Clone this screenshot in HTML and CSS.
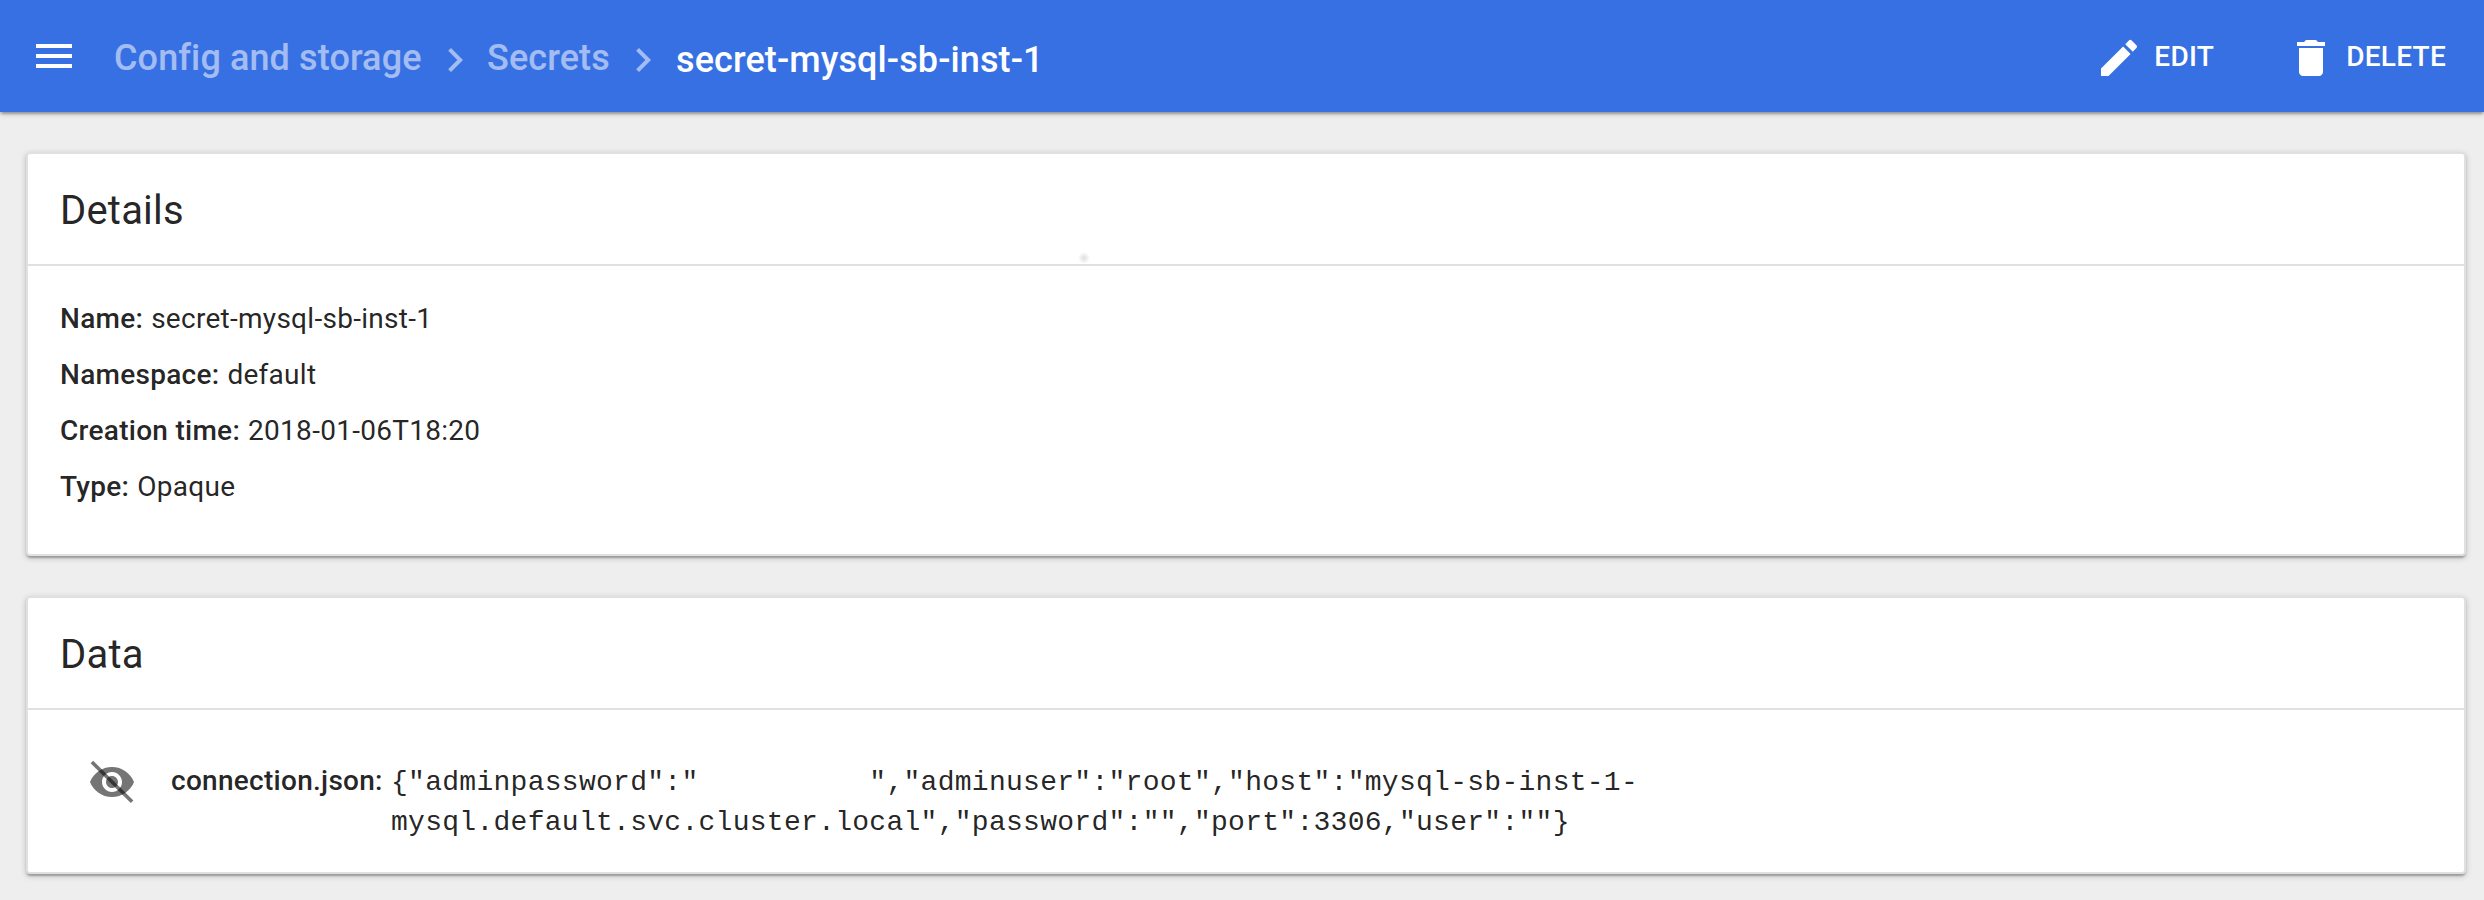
FILE: index.html
```html
<!DOCTYPE html>
<html lang="en">
<head>
<meta charset="utf-8">
<title>secret-mysql-sb-inst-1</title>
<link rel="stylesheet" href="styles.css">
</head>
<body>
<header class="toolbar">
  <svg class="icon menu" viewBox="0 0 24 24"><path d="M3 18h18v-2H3v2zm0-5h18v-2H3v2zm0-7v2h18V6H3z"/></svg>
  <nav class="crumbs">
    <a class="crumb first">Config and storage</a>
    <svg class="icon chevron" viewBox="0 0 24 24"><path d="M10 6L8.59 7.41 13.17 12l-4.58 4.59L10 18l6-6z"/></svg>
    <a class="crumb second">Secrets</a>
    <svg class="icon chevron" viewBox="0 0 24 24"><path d="M10 6L8.59 7.41 13.17 12l-4.58 4.59L10 18l6-6z"/></svg>
    <span class="crumb current">secret-mysql-sb-inst-1</span>
  </nav>
  <div class="actions">
    <button class="action edit"><svg class="icon" viewBox="0 0 24 24"><path d="M3 17.25V21h3.75L17.81 9.94l-3.75-3.75L3 17.25zM20.71 7.04a.996.996 0 0 0 0-1.41l-2.34-2.34a.996.996 0 0 0-1.41 0l-1.83 1.83 3.75 3.75 1.83-1.83z"/></svg><span>EDIT</span></button>
    <button class="action delete"><svg class="icon" viewBox="0 0 24 24"><path d="M6 19c0 1.1.9 2 2 2h8c1.1 0 2-.9 2-2V7H6v12zM19 4h-3.5l-1-1h-5l-1 1H5v2h14V4z"/></svg><span>DELETE</span></button>
  </div>
</header>
<main class="content">
  <section class="card details">
    <h2 class="card-title">Details<i class="spot"></i></h2>
    <div class="rows">
      <div class="row"><b>Name:</b><span>secret-mysql-sb-inst-1</span></div>
      <div class="row"><b>Namespace:</b><span>default</span></div>
      <div class="row"><b>Creation time:</b><span>2018-01-06T18:20</span></div>
      <div class="row"><b>Type:</b><span>Opaque</span></div>
    </div>
  </section>
  <section class="card data">
    <h2 class="card-title">Data</h2>
    <div class="entry">
      <svg class="icon eye" viewBox="0 0 24 24"><path d="M12 4.5C7 4.5 2.73 7.61 1 12c1.73 4.39 6 7.5 11 7.5s9.27-3.11 11-7.5c-1.73-4.39-6-7.5-11-7.5zM12 17c-2.76 0-5-2.24-5-5s2.24-5 5-5 5 2.24 5 5-2.24 5-5 5zm0-8c-1.66 0-3 1.34-3 3s1.34 3 3 3 3-1.34 3-3-1.34-3-3-3z"/><path d="M2.6 1.4L22.7 21.2l-1.3 1.3L1.3 2.6z"/></svg>
      <b class="key">connection.json:</b>
      <pre class="value">{"adminpassword":"          ","adminuser":"root","host":"mysql-sb-inst-1-
mysql.default.svc.cluster.local","password":"","port":3306,"user":""}</pre>
    </div>
  </section>
</main>
</body>
</html>
```
FILE: styles.css
```css
* { box-sizing: border-box; }
body {
  margin: 0;
  height: 900px;
  overflow: hidden;
  background: #eee;
  color: rgba(0, 0, 0, .87);
  font: 400 28px/40px Roboto, sans-serif;
  letter-spacing: .01em;
}
.icon { width: 48px; height: 48px; flex: none; fill: currentColor; display: block; }
.toolbar {
  position: relative;
  height: 112px;
  display: flex;
  padding: 32px 38px 0 30px;
  background: #3770e3;
  color: #fff;
  box-shadow: 0 2px 6px rgba(0, 0, 0, .2), 0 2px 2px rgba(0, 0, 0, .14), 0 4px 2px -2px rgba(0, 0, 0, .12);
}
.crumbs { display: flex; margin-left: 36px; font-size: 36px; font-weight: 500; line-height: 48px; letter-spacing: .003em; white-space: nowrap; }
.crumb { opacity: .54; margin-top: 2px; }
.crumb.first { width: 317px; }
.crumb.second { width: 132px; margin-left: 8px; }
.crumb.current { opacity: 1; margin: 4px 0 0 9px; }
.chevron { margin-top: 4px; opacity: .54; }
.actions { display: flex; margin-left: auto; }
.action { display: flex; align-items: flex-start; gap: 11px; padding: 2px 0 0; border: 0; background: none; color: #fff; font: 500 28px/46px Roboto, sans-serif; letter-spacing: .01em; }
.delete { margin-left: 73px; }
.content { display: flex; flex-direction: column; gap: 40px; padding: 40px 18px 0 26px; }
.card {
  background: #fff;
  border: 2px solid #e0e0e0;
  border-radius: 4px;
  box-shadow: 0 2px 6px rgba(0, 0, 0, .2), 0 2px 2px rgba(0, 0, 0, .14), 0 4px 2px -2px rgba(0, 0, 0, .12);
}
.details { height: 404px; }
.data { height: 278px; }
.card-title { position: relative; margin: 0; height: 112px; padding: 33px 32px 0; border-bottom: 2px solid #e0e0e0; font-size: 40px; font-weight: 400; line-height: 48px; letter-spacing: .005em; }
.spot { position: absolute; left: 1050px; top: 98px; width: 12px; height: 12px; background: radial-gradient(circle, #e2e2e2 10%, #fff 70%); }
.rows { display: flex; flex-direction: column; gap: 16px; padding: 33px 32px 0; }
.row { display: flex; gap: 8px; }
b { font-weight: 500; }
.entry { display: flex; align-items: flex-start; padding: 48px 60px 0; }
.eye { color: rgba(0, 0, 0, .54); }
.key { width: 220px; margin: 3px 0 0 35px; }
.value { margin: 5px 0 0; font: 400 28px/40px "Liberation Mono", monospace; letter-spacing: .01em; }
```
